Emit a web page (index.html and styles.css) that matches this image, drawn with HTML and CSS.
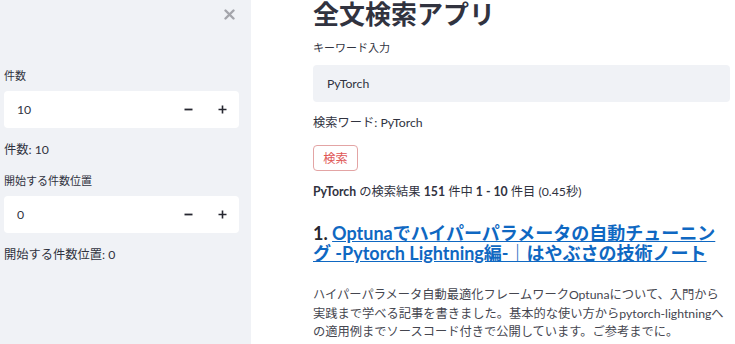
FILE: index.html
```html
<!DOCTYPE html>
<html lang="ja">
<head>
<meta charset="utf-8">
<title>全文検索アプリ</title>
<link rel="stylesheet" href="styles.css">
</head>
<body>
<div class="app">
  <aside class="sidebar">
    <div class="side-head">
      <button class="close" aria-label="close">
        <svg width="11" height="11" viewBox="0 0 11 11"><path d="M1.5 1.5 L9.5 9.5 M9.5 1.5 L1.5 9.5" stroke="#a4a5ab" stroke-width="2.4" stroke-linecap="round"/></svg>
      </button>
    </div>
    <div class="field first">
      <div class="label">件数</div>
      <div class="numinput">
        <div class="numval">10</div>
        <button class="step"><svg width="9" height="9" viewBox="0 0 9 9"><path d="M0.5 4.5 H8.5" stroke="#262730" stroke-width="1.8"/></svg></button>
        <button class="step"><svg width="9" height="9" viewBox="0 0 9 9"><path d="M0.5 4.5 H8.5 M4.5 0.5 V8.5" stroke="#262730" stroke-width="1.6"/></svg></button>
      </div>
      <div class="out">件数: 10</div>
    </div>
    <div class="field">
      <div class="label">開始する件数位置</div>
      <div class="numinput">
        <div class="numval">0</div>
        <button class="step"><svg width="9" height="9" viewBox="0 0 9 9"><path d="M0.5 4.5 H8.5" stroke="#262730" stroke-width="1.8"/></svg></button>
        <button class="step"><svg width="9" height="9" viewBox="0 0 9 9"><path d="M0.5 4.5 H8.5 M4.5 0.5 V8.5" stroke="#262730" stroke-width="1.6"/></svg></button>
      </div>
      <div class="out">開始する件数位置: 0</div>
    </div>
  </aside>
  <main class="main">
    <h1 class="title">全文検索アプリ</h1>
    <div class="label main-label">キーワード入力</div>
    <div class="textinput">PyTorch</div>
    <div class="out word">検索ワード: PyTorch</div>
    <button class="search">検索</button>
    <div class="out summary"><b>PyTorch</b> の検索結果 <b>151</b> 件中 <b>1 - 10</b> 件目 (0.45秒)</div>
    <h3 class="result-title">1. <a href="#">Optunaでハイパーパラメータの自動チューニング -Pytorch Lightning編-｜はやぶさの技術ノート</a></h3>
    <p class="desc">ハイパーパラメータ自動最適化フレームワークOptunaについて、入門から実践まで学べる記事を書きました。基本的な使い方からpytorch-lightningへの適用例までソースコード付きで公開しています。ご参考までに。</p>
  </main>
</div>
</body>
</html>
```
FILE: styles.css
```css
html, body {
  margin: 0;
  padding: 0;
  background: #ffffff;
}
body {
  font-family: "Lato", "Noto Sans CJK JP", sans-serif;
  color: #31333f;
  font-size: 12.25px;
  overflow: hidden;
}
.app {
  display: flex;
  height: 344px;
}
.sidebar {
  width: 251px;
  flex: none;
  background: #f0f2f6;
  padding: 0 12px 0 4px;
  box-sizing: border-box;
}
.side-head {
  height: 28px;
  display: flex;
  justify-content: flex-end;
  align-items: center;
  padding-right: 4px;
}
.close {
  border: none;
  background: none;
  padding: 0;
  display: flex;
  cursor: pointer;
}
.field {
  display: flex;
  flex-direction: column;
}
.field.first { margin-top: 40px; }
.field + .field { margin-top: 14px; }
.label {
  font-size: 11px;
  line-height: 16px;
  color: #31333f;
}
.numinput {
  margin-top: 7px;
  height: 37px;
  background: #ffffff;
  border-radius: 4px;
  display: flex;
  align-items: stretch;
}
.numval {
  flex: 1;
  display: flex;
  align-items: center;
  padding-left: 13px;
  font-size: 12.25px;
}
.step {
  width: 34px;
  border: none;
  background: none;
  padding: 0;
  display: flex;
  align-items: center;
  justify-content: center;
}
.out {
  line-height: 18px;
  font-size: 12.25px;
}
.field .out { margin-top: 13px; }
.main {
  flex: 1;
  padding: 0 5px 0 62px;
  min-width: 0;
}
.title {
  margin: 0;
  font-size: 26px;
  line-height: 28px;
  font-weight: 700;
  color: #31333f;
}
.main-label { margin-top: 12px; }
.textinput {
  margin-top: 9px;
  height: 37px;
  background: #f0f2f6;
  border-radius: 4px;
  display: flex;
  align-items: center;
  padding-left: 14px;
}
.word { margin-top: 12px; }
.search {
  margin-top: 13px;
  height: 26px;
  width: 45px;
  padding: 0;
  background: #ffffff;
  border: 1px solid #e3a4a4;
  border-radius: 4px;
  color: #e05656;
  font-family: inherit;
  font-size: 12.25px;
  display: block;
}
.summary { margin-top: 12px; }
.summary b { font-weight: 700; }
.result-title {
  margin: 22px 0 0 0;
  font-size: 18px;
  line-height: 20px;
  font-weight: 700;
  color: #262730;
}
.result-title a {
  color: #0f68c2;
  text-decoration: underline;
}
.desc {
  margin: 23px 0 0 0;
  line-height: 18.5px;
  font-size: 12.25px;
  color: #45464f;
}
```
